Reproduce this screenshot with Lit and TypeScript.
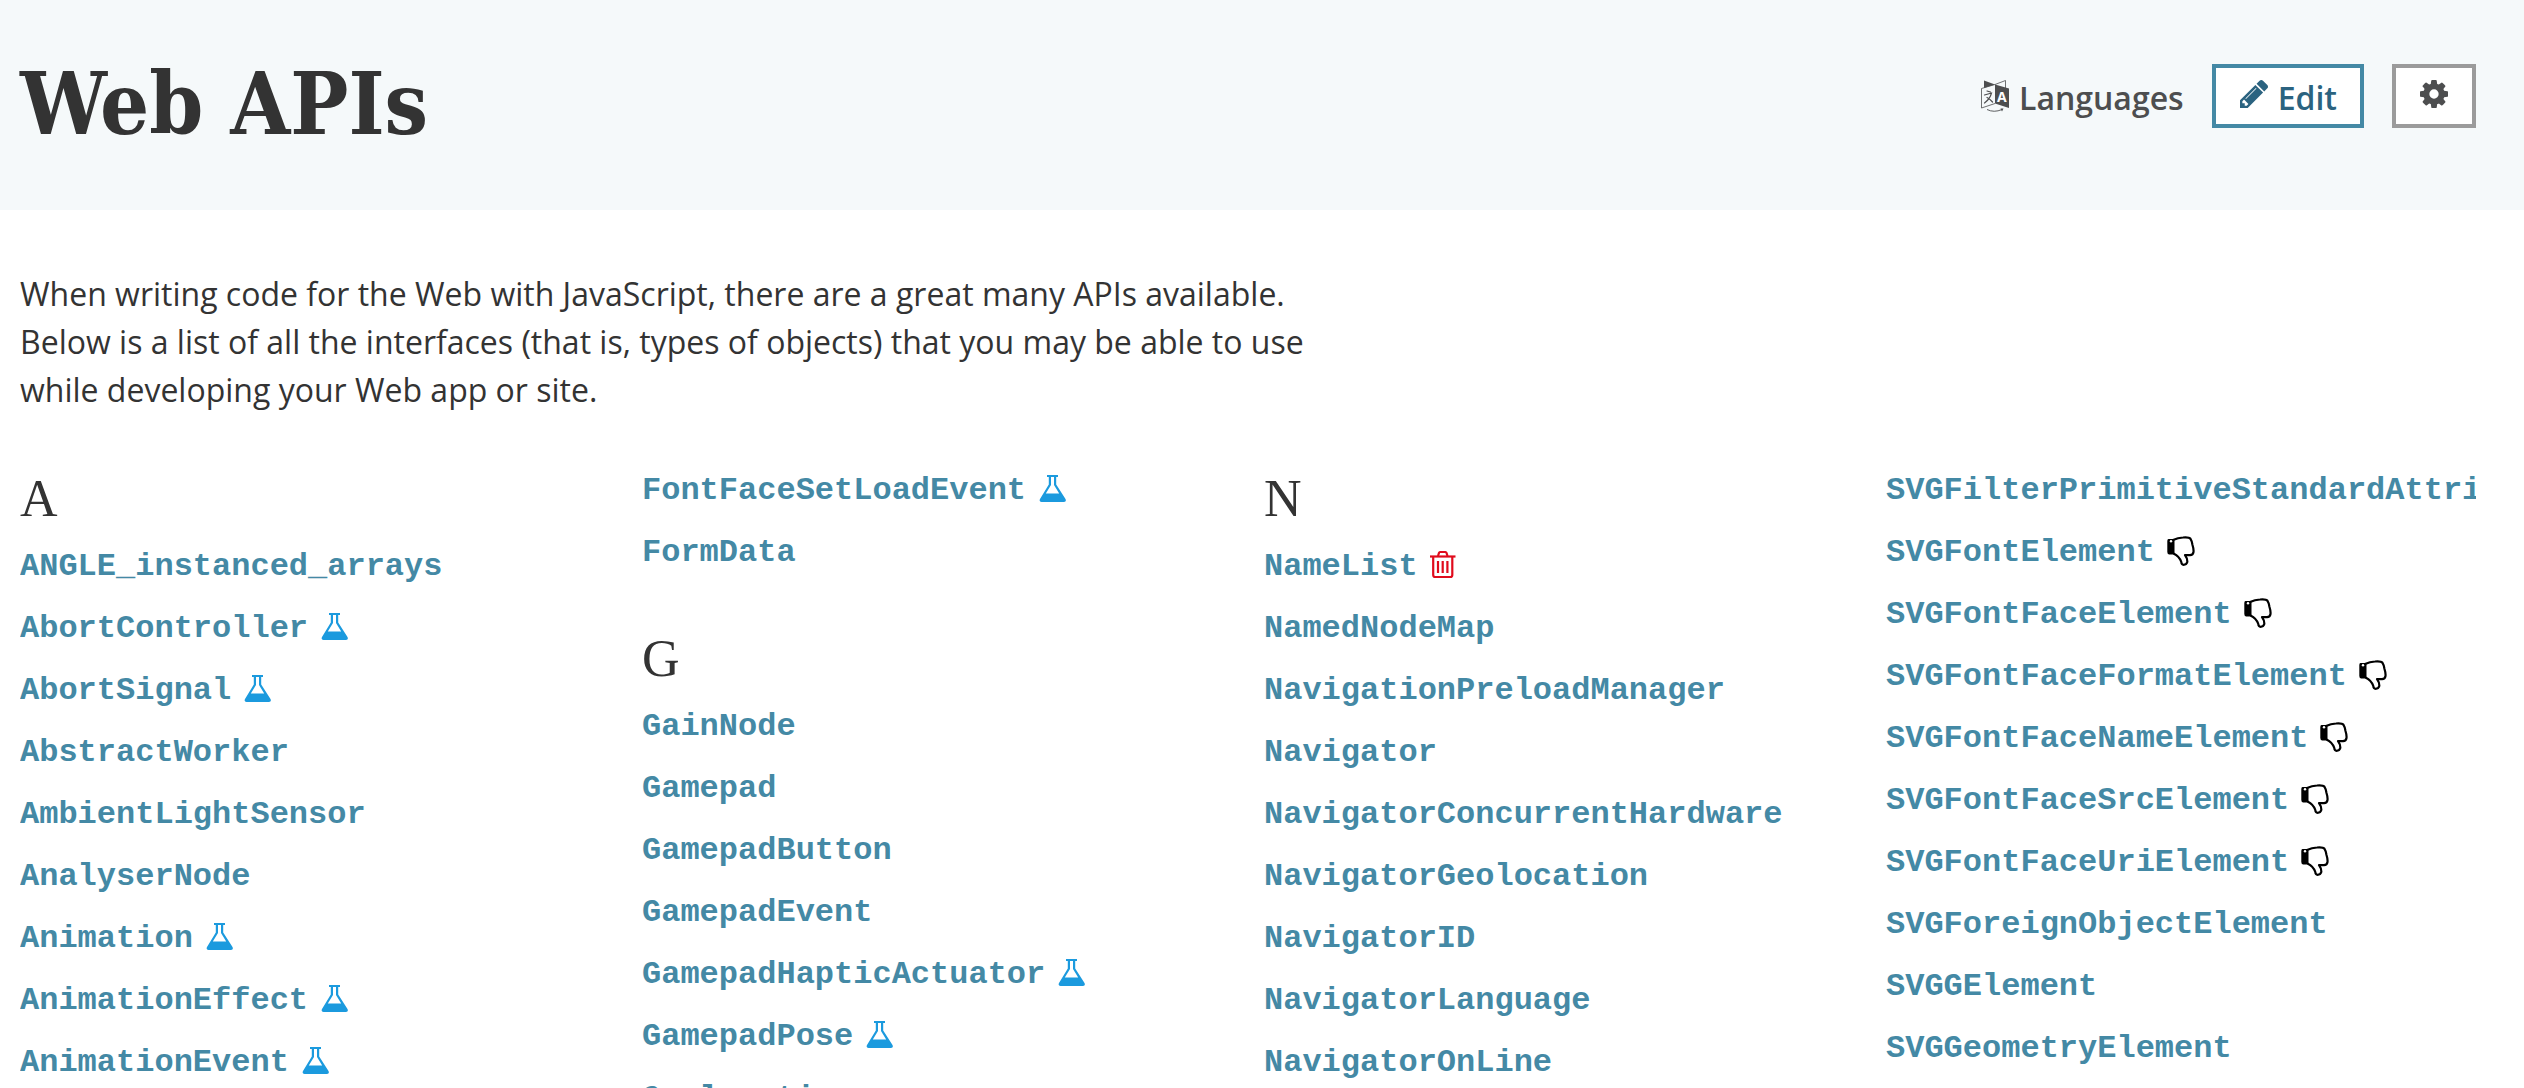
import { LitElement, html, css, svg, nothing } from "lit";
import { customElement, property } from "lit/decorators.js";

type Status = "experimental" | "deprecated" | "obsolete";

interface Entry {
  name: string;
  status?: Status;
}

interface Group {
  letter?: string;
  entries: Entry[];
}

const e = (name: string, status?: Status): Entry => ({ name, status });

const COLUMNS: Group[][] = [
  [
    {
      letter: "A",
      entries: [
        e("ANGLE_instanced_arrays"),
        e("AbortController", "experimental"),
        e("AbortSignal", "experimental"),
        e("AbstractWorker"),
        e("AmbientLightSensor"),
        e("AnalyserNode"),
        e("Animation", "experimental"),
        e("AnimationEffect", "experimental"),
        e("AnimationEvent", "experimental"),
      ],
    },
  ],
  [
    { entries: [e("FontFaceSetLoadEvent", "experimental"), e("FormData")] },
    {
      letter: "G",
      entries: [
        e("GainNode"),
        e("Gamepad"),
        e("GamepadButton"),
        e("GamepadEvent"),
        e("GamepadHapticActuator", "experimental"),
        e("GamepadPose", "experimental"),
        e("Geolocation"),
      ],
    },
  ],
  [
    {
      letter: "N",
      entries: [
        e("NameList", "obsolete"),
        e("NamedNodeMap"),
        e("NavigationPreloadManager"),
        e("Navigator"),
        e("NavigatorConcurrentHardware"),
        e("NavigatorGeolocation"),
        e("NavigatorID"),
        e("NavigatorLanguage"),
        e("NavigatorOnLine"),
      ],
    },
  ],
  [
    {
      entries: [
        e("SVGFilterPrimitiveStandardAttributes"),
        e("SVGFontElement", "deprecated"),
        e("SVGFontFaceElement", "deprecated"),
        e("SVGFontFaceFormatElement", "deprecated"),
        e("SVGFontFaceNameElement", "deprecated"),
        e("SVGFontFaceSrcElement", "deprecated"),
        e("SVGFontFaceUriElement", "deprecated"),
        e("SVGForeignObjectElement"),
        e("SVGGElement"),
        e("SVGGeometryElement"),
      ],
    },
  ],
];

const STATUS_ART = {
  experimental: svg`
    <path fill="#1b9ade" fill-rule="evenodd" d="M9 1h11v2h-1.800v7.500L27.500 25q1.200 3-1.500 3H3.500Q.8 28 2 25L10.800 10.500V3H9zM13 3v8L7.800 19.500h13.400L16 11V3z"/>`,
  obsolete: svg`
    <g fill="none" stroke="#e00b1c" stroke-width="2.200">
      <path d="M0 6.500h25.500"/>
      <path d="M8 6l1-3.200Q9.300 2 10 2h5.500q.7 0 1 .8l1 3.200"/>
      <path d="M3.200 7v18q0 2 2 2h15.100q2 0 2-2V7"/>
      <path d="M8 11v12M12.700 11v12M17.400 11v12"/>
    </g>`,
  deprecated: svg`
    <path d="M1.500 3H7.500v15.500H2Q.3 18 .3 16V5Q.3 3 1.500 3z"/>
    <circle cx="4" cy="5.200" r="1.200" fill="#fff"/>
    <path fill="none" stroke="#000" stroke-width="2.200" stroke-linejoin="round" d="M6 4Q11 1.800 16 1.500 22 .9 23.500 2.800 25 5 25.500 9 26.800 13 26.500 16 26 19 23 19.200L18 19.200Q20.500 22.500 20.300 26 19.500 28.800 16.500 28.800 14.500 28.800 14.300 26 12.500 20.500 6.500 17.500"/>`,
};

@customElement("status-icon")
class StatusIcon extends LitElement {
  @property() status: Status = "experimental";

  static styles = css`
    :host {
      display: block;
      flex: none;
    }
    .icon {
      display: block;
      width: 28px;
      height: 30px;
    }
  `;

  render() {
    return html`<svg class="icon" viewBox="0 0 28 30" role="img" aria-label=${this.status}>
      ${STATUS_ART[this.status]}
    </svg>`;
  }
}

@customElement("page-header")
class PageHeader extends LitElement {
  static styles = css`
    :host {
      display: block;
      background: #f5f9fa;
    }
    .bar {
      display: flex;
      align-items: flex-start;
      justify-content: space-between;
      padding: 64px 48px 66px 20px;
    }
    .title {
      margin: 0;
      color: #333;
      font: 700 86px/80px "DejaVu Serif Condensed", "DejaVu Serif", serif;
    }
    .actions {
      display: flex;
      gap: 28px;
    }
    .button {
      display: flex;
      align-items: center;
      gap: 10px;
      box-sizing: border-box;
      height: 64px;
      margin: 0;
      padding: 0 24px;
      border: 4px solid #9b9b9b;
      background: #fff;
      color: #4d4e4f;
      font: 600 32px/48px "Open Sans", sans-serif;
      text-decoration: none;
      cursor: pointer;
    }
    .plain {
      padding: 0;
      border: 0;
      background: none;
    }
    .edit {
      padding-right: 23px;
      border-color: #4489a5;
      color: #2b6380;
    }
    .label {
      padding-top: 4px;
    }
    .glyph {
      display: block;
      width: 28px;
      height: 28px;
      margin-bottom: 4px;
      fill: currentColor;
    }
    .tall {
      height: 32px;
      margin-bottom: 0;
    }
    .glyph-letter {
      font: 700 14px "Open Sans", sans-serif;
    }
  `;

  render() {
    return html`
      <header class="bar">
        <h1 class="title">Web APIs</h1>
        <div class="actions">
          <button class="button plain" type="button">
            <svg class="glyph tall" viewBox="0 0 28 32" aria-hidden="true">
              <path d="M3 0.500L14 4.500 3 8z" />
              <path fill="none" stroke="currentColor" stroke-width="0.800" d="M14 4.500L24.500.500V8M14 4.500L.5 8.500V28L14 23.500" />
              <path d="M14 4.500L28 8.500V28L14 23.500z" />
              <path fill="none" stroke="currentColor" stroke-width="1.200" stroke-linecap="round" d="M6 11l3.500 1M3.500 15l7-2Q9 19 3.500 23M6 17.500Q9 19 11.500 22" />
              <path fill="none" stroke="currentColor" stroke-width="0.900" d="M6 29.500Q13 33 21 29.500" />
              <path d="M19.500 28.500h3l-1.500 3z" />
              <text class="glyph-letter" x="16" y="22" fill="#fff">A</text>
            </svg>
            <span class="label">Languages</span>
          </button>
          <a class="button edit" href="#edit">
            <svg class="glyph" viewBox="0 149 1515 1515" aria-hidden="true">
              <path d="M363 1536l91-91-235-235-91 91v107h128v128h107zm523-928q0-22-22-22-10 0-17 7l-542 542q-7 7-7 17 0 22 22 22 10 0 17-7l542-542q7-7 7-17zm-54-192l416 416-832 832h-416v-416zm683 96q0 53-37 90l-166 166-416-416 166-165q36-38 90-38 53 0 91 38l235 234q37 39 37 91z" />
            </svg>
            <span class="label">Edit</span>
          </a>
          <button class="button" type="button" aria-label="Settings">
            <svg class="glyph" viewBox="0 128 1536 1536" aria-hidden="true">
              <path d="M1024 896q0-106-75-181t-181-75-181 75-75 181 75 181 181 75 181-75 75-181zm512-109v222q0 12-8 23t-20 13l-185 28q-19 54-39 91 35 50 107 138 10 12 10 25t-9 23q-27 37-99 108t-94 71q-12 0-26-9l-138-108q-44 23-91 38-16 136-29 186-7 28-36 28h-222q-14 0-24.500-8.500t-11.500-21.500l-28-184q-49-16-90-37l-141 107q-10 9-25 9-14 0-25-11-126-114-165-168-7-10-7-23 0-12 8-23 15-21 51-66.500t54-70.500q-27-50-41-99l-183-27q-13-2-21-12.500t-8-23.500v-222q0-12 8-23t19-13l186-28q14-46 39-92-40-57-107-138-10-12-10-24 0-10 9-23 26-36 98.500-107.500t94.500-71.500q13 0 26 10l138 107q44-23 91-38 16-136 29-186 7-28 36-28h222q14 0 24.500 8.500t11.500 21.500l28 184q49 16 90 37l142-107q9-9 24-9 13 0 25 10 129 119 165 170 7 8 7 22 0 12-8 23-15 21-51 66.500t-54 70.500q26 50 41 98l183 28q13 2 21 12.500t8 23.500z" />
            </svg>
          </button>
        </div>
      </header>
    `;
  }
}

@customElement("app-root")
class AppRoot extends LitElement {
  static styles = css`
    :host {
      display: block;
      height: 100vh;
      overflow: hidden;
      background: #fff;
      color: #333;
      font: 400 32px/48px "Open Sans", sans-serif;
    }
    .content {
      padding: 60px 48px 0 20px;
    }
    .intro {
      max-width: 1300px;
      margin: 0 0 44px;
    }
    .index {
      display: grid;
      grid-template-columns: repeat(4, minmax(0, 1fr));
      gap: 32px;
    }
    .column {
      overflow: hidden;
    }
    .group + .group {
      margin-top: 36px;
    }
    .letter {
      margin: 0;
      padding-top: 6px;
      font: 400 52px/70px "Liberation Serif", serif;
    }
    .list {
      margin: 0;
      padding: 0;
      list-style: none;
    }
    .row {
      display: flex;
      align-items: center;
      gap: 12px;
      height: 62px;
    }
    .link {
      padding-top: 3px;
      color: #4489a5;
      font: 700 32px/48px "Liberation Mono", monospace;
      text-decoration: none;
      white-space: nowrap;
    }
  `;

  private renderGroup(group: Group) {
    return html`
      <section class="group">
        ${group.letter ? html`<h2 class="letter">${group.letter}</h2>` : nothing}
        <ul class="list">
          ${group.entries.map(
            (entry) => html`
              <li class="row">
                <a class="link" href="#${entry.name}">${entry.name}</a>
                ${entry.status ? html`<status-icon .status=${entry.status}></status-icon>` : nothing}
              </li>
            `,
          )}
        </ul>
      </section>
    `;
  }

  render() {
    return html`
      <page-header></page-header>
      <main class="content">
        <p class="intro">
          When writing code for the Web with JavaScript, there are a great many APIs available. Below is a list of all
          the interfaces (that is, types of objects) that you may be able to use while developing your Web app or site.
        </p>
        <div class="index">
          ${COLUMNS.map((groups) => html`<div class="column">${groups.map((g) => this.renderGroup(g))}</div>`)}
        </div>
      </main>
    `;
  }
}
